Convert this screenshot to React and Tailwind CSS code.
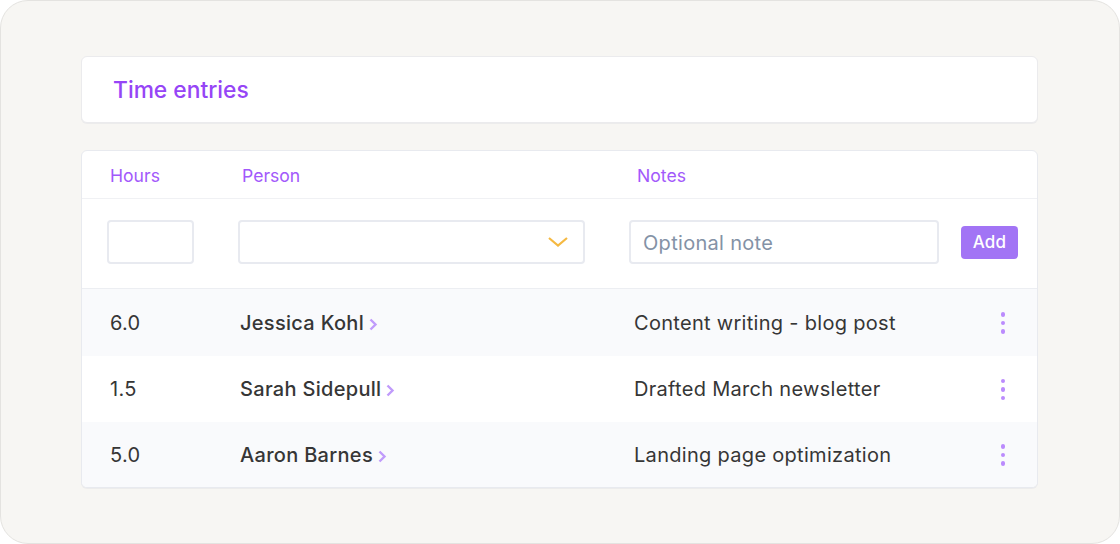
import React from 'react'

const entries = [
  { hours: '6.0', person: 'Jessica Kohl', note: 'Content writing - blog post', striped: true },
  { hours: '1.5', person: 'Sarah Sidepull', note: 'Drafted March newsletter', striped: false },
  { hours: '5.0', person: 'Aaron Barnes', note: 'Landing page optimization', striped: true },
]

function Chevron() {
  return (
    <svg width="9" height="13" viewBox="0 0 9 13" fill="none" className="ml-[5px] mt-[3px]">
      <path d="M1.5 1.5 L6.5 6.5 L1.5 11.5" stroke="#c09bfb" strokeWidth="2.4" />
    </svg>
  )
}

function Dots() {
  return (
    <div className="flex flex-col gap-[4px] mt-[1px]">
      <span className="w-[4.5px] h-[4.5px] rounded-full bg-[#bb8bfd]"></span>
      <span className="w-[4.5px] h-[4.5px] rounded-full bg-[#bb8bfd]"></span>
      <span className="w-[4.5px] h-[4.5px] rounded-full bg-[#bb8bfd]"></span>
    </div>
  )
}

export default function App() {
  return (
    <div className="w-[1120px] h-[544px] bg-white font-['Inter',sans-serif]">
      <div className="w-full h-full bg-[#f7f6f3] border border-[#e4e3e0] rounded-[28px] pt-[55px] pl-[80px] pr-[81px]">
        {/* Title */}
        <div className="h-[67px] pt-[1px] bg-white border border-[#ebebed] rounded-[6px] shadow-[0_1px_0_#ececec] flex items-center pl-[31px]">
          <h1 className="text-[22.8px] font-medium text-[#9645f6]">Time entries</h1>
        </div>

        {/* Table */}
        <div className="mt-[27px] bg-white border border-[#e8eaef] rounded-[6px] shadow-[0_1px_0_#ececec] overflow-hidden">
          <div className="h-[48px] pt-[3px] flex items-center border-b border-[#f0f1f4] text-[17.6px] text-[#a259fb]">
            <div className="w-[160px] pl-[28px]">Hours</div>
            <div className="w-[395px]">Person</div>
            <div>Notes</div>
          </div>

          <div className="h-[90px] pb-[4px] flex items-center border-b border-[#eceef2] pl-[25px]">
            <input className="w-[87px] h-[44px] bg-white border-2 border-[#e8eaf0] rounded-[4px]" />
            <div className="w-[347px] h-[44px] ml-[44px] border-2 border-[#e8eaf0] rounded-[4px] flex items-center justify-end pr-[15px]">
              <svg width="20" height="10" viewBox="0 0 20 10" fill="none">
                <path d="M1 1 L10 8.5 L19 1" stroke="#f5b942" strokeWidth="2.2" />
              </svg>
            </div>
            <input
              placeholder="Optional note"
              className="w-[310px] h-[44px] ml-[44px] px-[12px] pt-[2px] border-2 border-[#e8eaf0] rounded-[4px] text-[20px] tracking-[0.3px] placeholder:text-[#8492a6] outline-none"
            />
            <button className="w-[57px] h-[33px] ml-[22px] mt-[2px] rounded-[4px] bg-[#a274f5] text-white text-[17px] font-medium tracking-[0.2px]">
              Add
            </button>
          </div>

          <div>
            {entries.map((entry) => (
              <div
                key={entry.person}
                className={`h-[66px] first:h-[67px] last:h-[65px] flex items-center text-[20px] tracking-[0.3px] text-[#363636] ${entry.striped ? 'bg-[#f9fafc]' : 'bg-white'}`}
              >
                <div className="w-[158px] pl-[28px]">{entry.hours}</div>
                <div className="w-[394px] flex items-center font-medium">
                  {entry.person}
                  <Chevron />
                </div>
                <div className="flex-1">{entry.note}</div>
                <div className="pr-[32px]">
                  <Dots />
                </div>
              </div>
            ))}
          </div>
        </div>
      </div>
    </div>
  )
}
